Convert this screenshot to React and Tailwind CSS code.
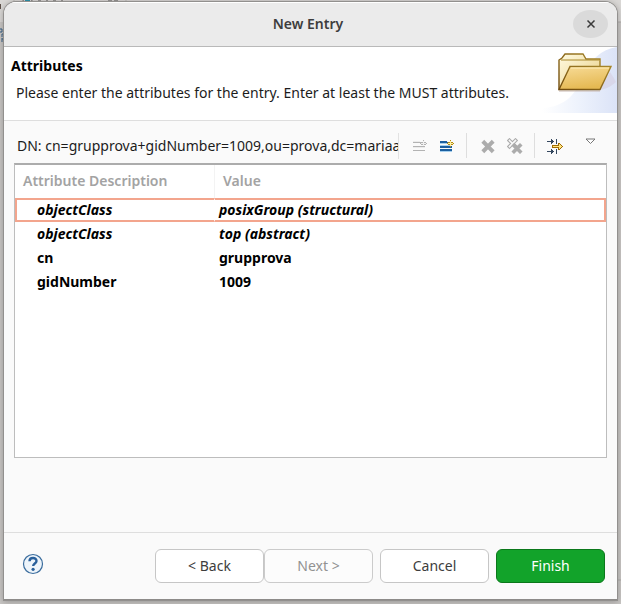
import React from "react";

const attributes = [
  { name: "objectClass", value: "posixGroup (structural)", kind: "class", selected: true },
  { name: "objectClass", value: "top (abstract)", kind: "class" },
  { name: "cn", value: "grupprova", kind: "plain" },
  { name: "gidNumber", value: "1009", kind: "plain" },
];

function FolderBanner() {
  return (
    <svg width="75" height="66" viewBox="0 0 75 66" className="shrink-0" aria-hidden="true">
      <defs>
        <linearGradient id="sky" x1="0" y1="0" x2="1" y2="0">
          <stop offset="0" stopColor="#ffffff" />
          <stop offset="0.5" stopColor="#edf2fc" />
          <stop offset="1" stopColor="#dbe3f7" />
        </linearGradient>
        <linearGradient id="back" x1="0" y1="0" x2="1" y2="1">
          <stop offset="0" stopColor="#fffbe2" />
          <stop offset="1" stopColor="#e8cd82" />
        </linearGradient>
        <linearGradient id="front" x1="0" y1="0" x2="0.3" y2="1">
          <stop offset="0" stopColor="#f8dc98" />
          <stop offset="1" stopColor="#e5b953" />
        </linearGradient>
        <linearGradient id="edge" x1="0" y1="1" x2="1" y2="0">
          <stop offset="0" stopColor="#704a0c" />
          <stop offset="1" stopColor="#a8882c" />
        </linearGradient>
      </defs>
      <path d="M0 66V61C24 60 34 46 41 30C48 13 59 2 75 0V66Z" fill="url(#sky)" />
      <path d="M56 43L68 25Q72 31 74 35Q65 43 56 43Z" fill="#d6d2e4" opacity="0.7" />
      <path d="M17 44H58" stroke="#c9b9b3" strokeWidth="2" opacity="0.5" />
      <path d="M17 42V13L20 11L23 7H41L44 12H58V40Z" fill="url(#back)" stroke="url(#edge)" strokeWidth="1.4" />
      <path d="M19 13H57" stroke="#a8882c" strokeWidth="1" />
      <path d="M17 42.5L28 19.5H69L58 42.5Z" fill="url(#front)" stroke="url(#edge)" strokeWidth="1.4" />
      <path d="M29 21H67" stroke="#fff0bd" strokeWidth="1" />
    </svg>
  );
}

function NewValueIcon({ muted }) {
  const bar = muted ? "#b3b3b3" : "#1b5f9f";
  const soft = muted ? "#ececec" : "#a6d0ef";
  return (
    <svg width="16" height="16" viewBox="0 0 16 16" shapeRendering="crispEdges" aria-hidden="true">
      <path d="M1 4h8v1H1zM1 8h12v1H1zM1 12h12v1H1z" fill={bar} />
      {!muted && <path d="M1 3h7v1H1zM1 9h12v1H1zM1 11h12v1H1z" fill={bar} />}
      <path d={muted ? "M1 3h7v1H1zM1 9h12v1H1z" : "M1 5h8v1H1zM1 7h10v1H1zM1 13h12v1H1z"} fill={soft} />
      <path d="M11 2h1v2h2v1h1v1h-1v1h-2v2h-1V7H9V6H8V5h1V4h2z" fill={muted ? "#b3b3b3" : "#b68b13"} />
      <path d="M11 3h1v2h2v1h-2v2h-1V6H9V5h2z" fill={muted ? "#f0f0f0" : "#fff0a0"} />
    </svg>
  );
}

function DeleteIcon() {
  return (
    <svg width="16" height="16" viewBox="0 0 16 16" aria-hidden="true">
      <path d="M4.2 4.7L11.8 12.3M11.8 4.7L4.2 12.3" stroke="#acacac" strokeWidth="4" strokeLinecap="square" strokeLinejoin="round" />
    </svg>
  );
}

function DeleteAllIcon() {
  return (
    <svg width="16" height="16" viewBox="0 0 16 16" aria-hidden="true">
      <path d="M2.5 2.5L8.5 8.5M8.5 2.5L2.5 8.5" stroke="#acacac" strokeWidth="3.8" strokeLinecap="square" />
      <path d="M2.5 2.5L8.5 8.5M8.5 2.5L2.5 8.5" stroke="#fafafa" strokeWidth="1.6" strokeLinecap="square" />
      <path d="M7 7.5L13 13.5M13 7.5L7 13.5" stroke="#acacac" strokeWidth="3.6" strokeLinecap="square" />
    </svg>
  );
}

function DefaultEditorIcon() {
  return (
    <svg width="18" height="16" viewBox="0 0 18 16" shapeRendering="crispEdges" aria-hidden="true">
      <path d="M1 3h7v1H1zM1 13h7v1H1zM5 1h1v5H5zM6 2h1v3H6zM5 11h1v5H5zM6 12h1v3H6zM10 1h1v5h-1zM10 11h1v5h-1z" fill="#35485f" />
      <path d="M6 7h6V5h2v1h1v1h1v1h1v1h-1v1h-1v1h-1v1h-2v-2H6z" fill="#a06b05" />
      <path d="M7 8h6V6h1v1h1v1h1v1h-1v1h-1v1h-1V9H7z" fill="#ffe57e" />
    </svg>
  );
}

function ToolButton({ label, disabled, children }) {
  return (
    <button type="button" aria-label={label} disabled={disabled} className="flex h-6 w-5 shrink-0 items-center justify-center">
      {children}
    </button>
  );
}

function DialogButton({ variant = "normal", disabled, children }) {
  const look =
    variant === "primary"
      ? "border-[#0b781b] bg-[#12a32a] text-white"
      : disabled
        ? "border-[#cbcbcb] bg-[#fcfcfc] text-[#929292]"
        : "border-[#c6c6c6] bg-white text-[#3d3d3d]";
  return (
    <button type="button" disabled={disabled} className={`h-[34px] w-[109px] rounded-md border text-sm ${look}`}>
      {children}
    </button>
  );
}

function Backdrop() {
  return (
    <svg className="absolute inset-0 h-full w-full" aria-hidden="true">
      <rect width="100%" height="22" fill="#dad8d6" />
      <path d="M14 0V8M126 0V8" stroke="#b9b7b4" />
      <path d="M21 2L24 0M34 2L31 0" stroke="#777" />
      <rect x="25" width="5" height="2" fill="#168eab" />
      <path d="M38 1h3M46 1h2M53 1h3M62 0v2M108 1h4M114 1h4" stroke="#444" />
      <path d="M0 4V9" stroke="#5c4f48" strokeWidth="2" />
      <path d="M0 29h2v3H0M2 34h2M2 34v3M2 39h2M2 38v4" stroke="#23527e" fill="none" />
      <path d="M617 22H621M617 580H621" stroke="#aaa8a6" />
    </svg>
  );
}

export default function App() {
  return (
    <div className="relative flex min-h-screen flex-col overflow-hidden bg-[#c8c6c4] px-1 pt-0.5 pb-1 font-['Noto_Sans','Open_Sans',sans-serif] text-sm text-[#1c1c1c]">
      <Backdrop />
      <main className="relative flex flex-1 flex-col overflow-hidden rounded-t-xl border-b border-[#8d8b89] bg-[#fafafa] shadow-[0_0_0_1px_#92908e,0_1px_6px_1px_#77757399]">
        <header className="grid h-[45px] shrink-0 grid-cols-[1fr_auto_1fr] items-center border-t border-b border-t-white border-b-[#b9b9b9] bg-[#ebebeb] pr-[9px] pl-1 pb-0.5">
          <h1 className="col-start-2 text-sm font-semibold text-[#3d3d3d]">New Entry</h1>
          <button type="button" aria-label="Close" className="flex h-7 w-[35px] items-center justify-center justify-self-end rounded-[50%] bg-[#dadada]">
            <svg width="10" height="10" viewBox="0 0 10 10" aria-hidden="true">
              <path d="M1.5 1.5L8.5 8.5M8.5 1.5L1.5 8.5" stroke="#3a3a3a" strokeWidth="1.5" />
            </svg>
          </button>
        </header>

        <section className="flex h-[74px] shrink-0 justify-between border-b border-[#dedede] bg-white">
          <div className="pt-[7px] pl-[7px] whitespace-nowrap">
            <h2 className="text-sm leading-6 font-bold text-black">Attributes</h2>
            <p className="pl-[5px] text-sm leading-[30px]">
              Please enter the attributes for the entry. Enter at least the MUST attributes.
            </p>
          </div>
          <FolderBanner />
        </section>

        <section className="flex flex-1 flex-col px-2.5 pt-3">
          <div className="flex h-[30px] shrink-0 items-start">
            <p className="ml-[3px] min-w-0 flex-1 overflow-hidden border-r border-[#e2e2e2] leading-[26px] whitespace-nowrap">
              DN: cn=grupprova+gidNumber=1009,ou=prova,dc=mariaa
            </p>
            <div className="ml-[11px] flex shrink-0 items-center gap-[7px] pt-px" role="toolbar" aria-label="Attribute actions">
              <ToolButton label="New value" disabled><NewValueIcon muted /></ToolButton>
              <ToolButton label="New attribute"><NewValueIcon /></ToolButton>
            </div>
            <div className="ml-[9px] flex shrink-0 items-center gap-[7px] border-l border-[#dedede] pt-px pl-[11px]">
              <ToolButton label="Delete value" disabled><DeleteIcon /></ToolButton>
              <ToolButton label="Delete all values" disabled><DeleteAllIcon /></ToolButton>
            </div>
            <div className="ml-[9px] flex shrink-0 items-center gap-[15px] border-l border-[#dedede] pt-px pr-[7px] pl-[10px]">
              <ToolButton label="Edit value with default editor"><DefaultEditorIcon /></ToolButton>
              <button type="button" aria-label="View menu" className="flex h-6 w-5 items-start justify-center pt-1">
                <svg width="11" height="7" viewBox="0 0 11 7" aria-hidden="true">
                  <path d="M1 1H10L5.5 5.5Z" fill="#fff" stroke="#777" />
                </svg>
              </button>
            </div>
          </div>

          <div className="mb-[74px] flex-1 border border-t-2 border-[#bdbdbd] border-t-[#acacac] bg-white">
            <table className="w-full table-fixed border-separate border-spacing-0 text-left">
              <colgroup>
                <col className="w-[199px]" />
                <col />
              </colgroup>
              <thead>
                <tr className="h-[33px] text-[#a3a3a3]">
                  <th scope="col" className="pb-0.5 pl-2 font-semibold">Attribute Description</th>
                  <th scope="col" className="border-l border-[#f3f3f3] pb-0.5 pl-2 font-semibold">Value</th>
                </tr>
              </thead>
              <tbody>
                {attributes.map((row, i) => {
                  const edge = row.selected ? "border-y-[#f3a58d]" : "border-y-transparent";
                  const slant = row.kind === "class" ? "italic" : "";
                  return (
                    <tr key={i} className={`h-6 font-bold text-black ${slant}`}>
                      <td className={`border-y-2 border-l-2 py-0 pl-5 leading-5 ${edge} ${row.selected ? "border-l-[#f3a58d]" : "border-l-transparent"}`}>
                        {row.name}
                      </td>
                      <td className={`border-y-2 border-r-2 border-l border-l-white py-0 pl-1 leading-5 ${edge} ${row.selected ? "border-r-[#f3a58d]" : "border-r-transparent"}`}>
                        {row.value}
                      </td>
                    </tr>
                  );
                })}
              </tbody>
            </table>
          </div>
        </section>

        <footer className="flex h-[67px] shrink-0 items-center justify-between border-t border-[#dedede] pr-3 pl-[18px]">
          <button type="button" aria-label="Help" className="pb-1">
            <svg width="22" height="22" viewBox="0 0 22 22" aria-hidden="true">
              <circle cx="11" cy="11" r="9.5" fill="#edf4fa" stroke="#3a6c9d" strokeWidth="1.2" />
              <path d="M7.5 8.2C7.6 3.9 14.5 4 14.5 8C14.5 10.5 11.2 10.6 11.2 13" fill="none" stroke="#285f9b" strokeWidth="2.4" />
              <circle cx="11.1" cy="16.3" r="1.6" fill="#285f9b" />
            </svg>
          </button>
          <div className="flex gap-[7px]">
            <div className="flex">
              <DialogButton>&lt; Back</DialogButton>
              <DialogButton disabled>Next &gt;</DialogButton>
            </div>
            <DialogButton>Cancel</DialogButton>
            <DialogButton variant="primary">Finish</DialogButton>
          </div>
        </footer>
      </main>
    </div>
  );
}
